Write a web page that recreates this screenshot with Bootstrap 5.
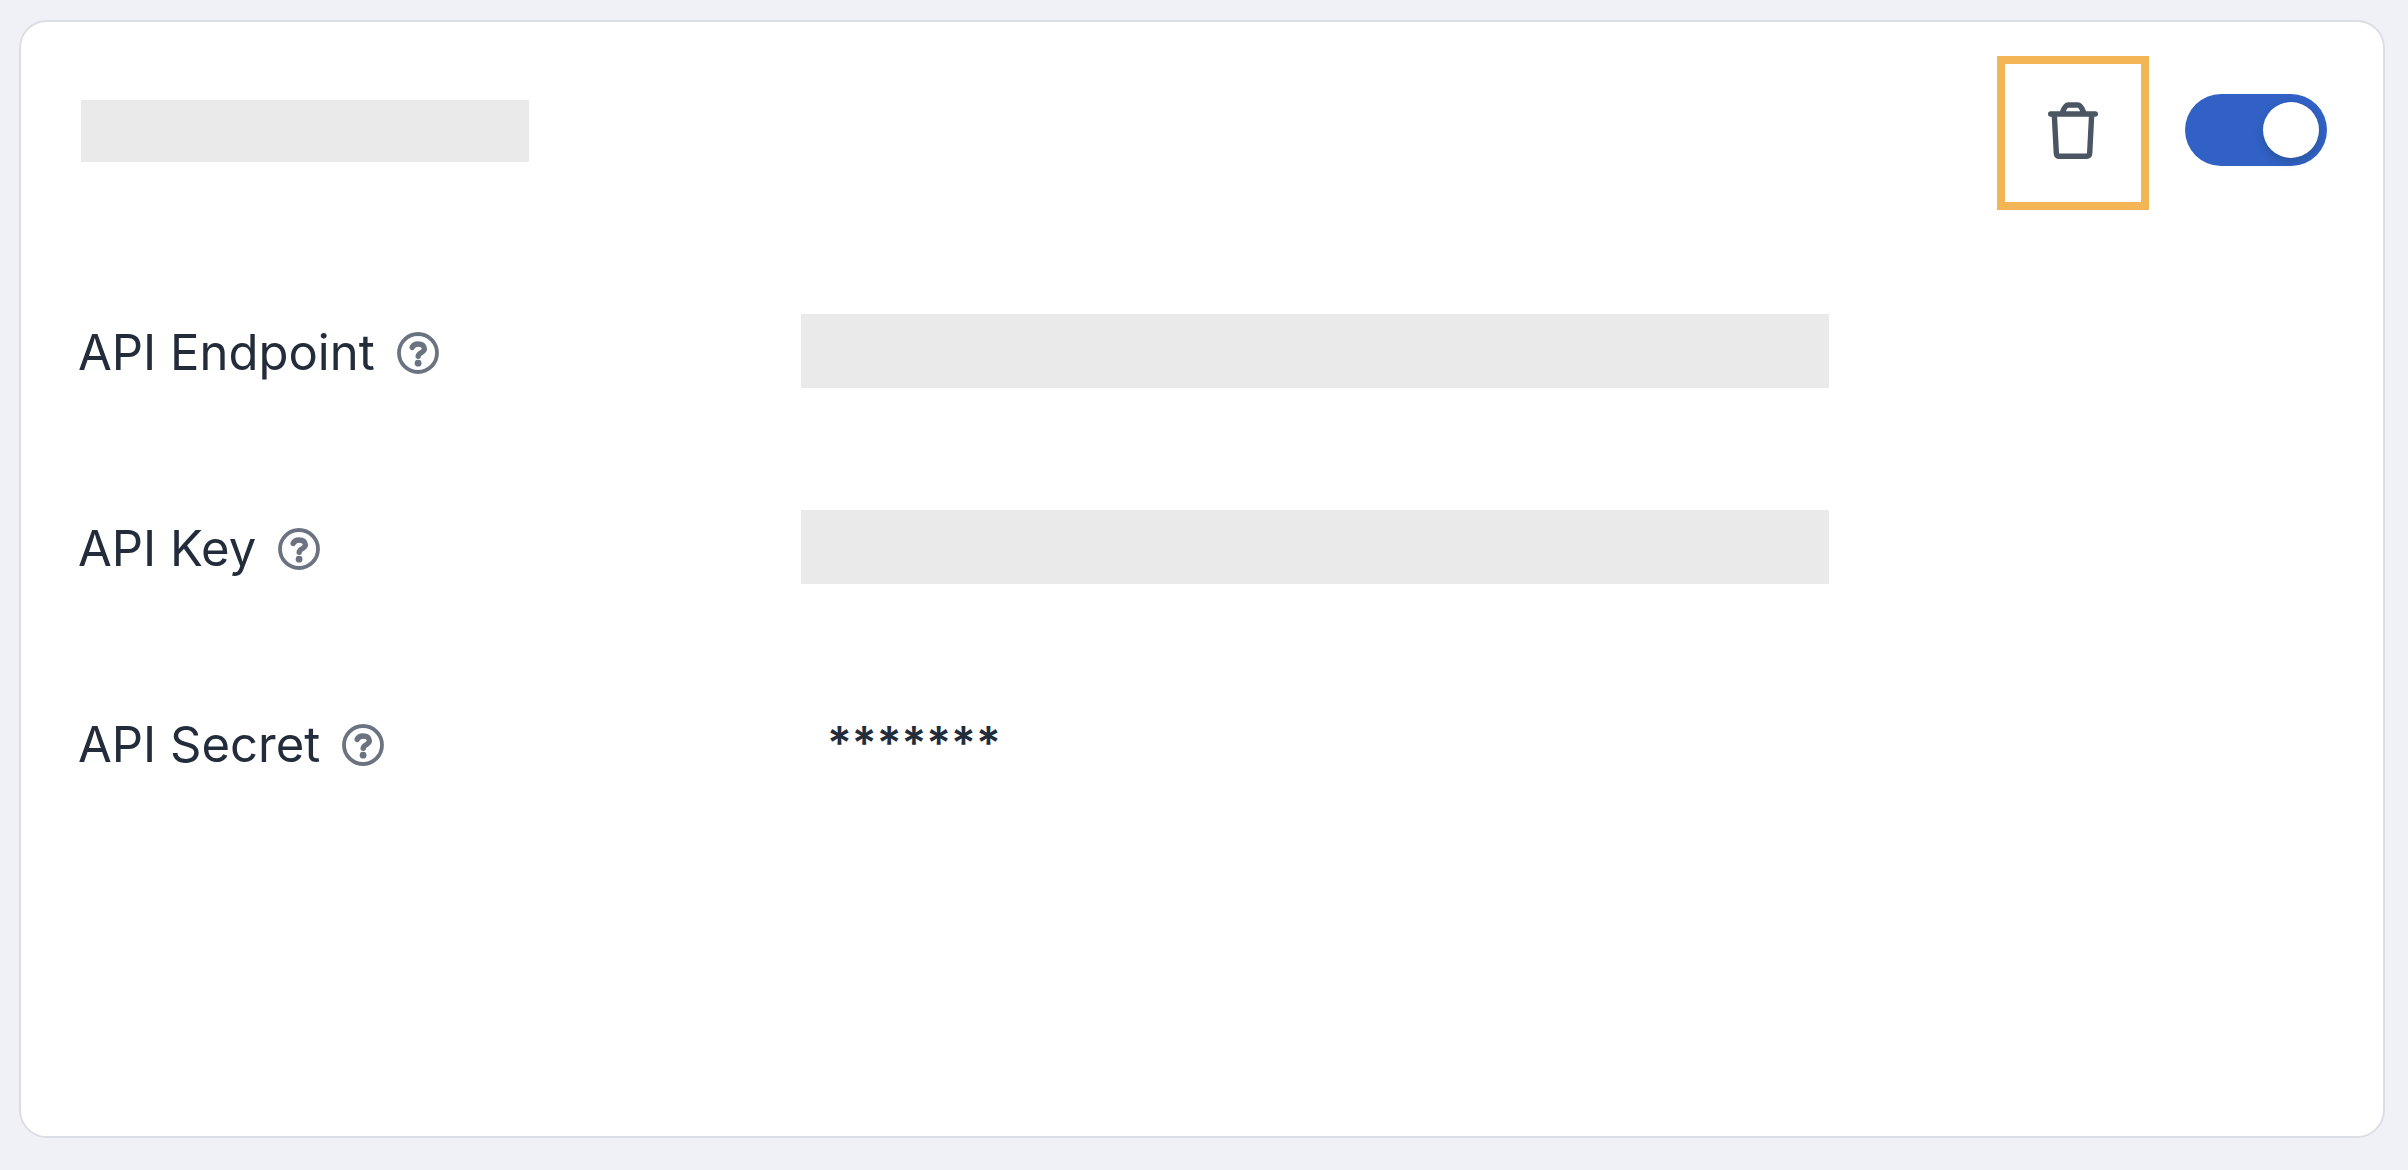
<!DOCTYPE html>
<html lang="en">
<head>
<meta charset="utf-8">
<meta name="viewport" content="width=device-width, initial-scale=1">
<title>API settings</title>
<link href="https://cdn.jsdelivr.net/npm/bootstrap@5.3.0/dist/css/bootstrap.min.css" rel="stylesheet">
<style>
body { background: #eff1f6; color: #232c3a; font-family: Inter, "Liberation Sans", sans-serif; font-size: 49px; line-height: 70px; }
.page-shell { min-height: 100vh; padding: 20px 23px 32px 19px; }
.api-card { border: 2px solid #dbdee4; border-radius: 28px; padding: 34px 56px 56px 57px; }
.api-title { width: 448px; height: 62px; margin: 0 0 4px 3px; background: #eaeaea; }
.card-actions { gap: 36px; }
.delete-btn { width: 152px; height: 154px; border: 8px solid #f4b556; border-radius: 0; padding: 0 0 6px; color: #4b5563; }
.form-check-input.api-switch { width: 142px; height: 72px; margin: 0 0 6px; padding: 8px; border: 0; border-radius: 36px; background: #3161c5; appearance: none; display: flex; }
.api-switch::before { content: ""; width: 56px; height: 56px; border-radius: 50%; background: #fff; box-shadow: 0 4px 8px rgba(0, 35, 11, .2); }
.form-check-input.api-switch:checked { background: #3161c5; justify-content: flex-end; }
.form-check-input.api-switch:not(:checked) { background: #9ca3af; }
.field-list { margin-top: 104px; gap: 122px; }
.field-line { display: grid; grid-template-columns: 723fr 1028fr 498fr; align-items: center; }
.field-name { gap: 22px; padding-top: 3px; }
.help-btn { color: #6b7280; line-height: 0; }
.field-value { width: 100%; height: 74px; padding: 0 26px; border: 0; border-radius: 0; color: inherit; font: inherit; background: transparent; }
.value-hidden { background: #eaeaea; }
.value-masked { font-size: 46px; font-weight: 600; }
</style>
</head>
<body>
<svg class="d-none" aria-hidden="true">
  <symbol id="help" viewBox="0 0 42 42">
    <circle cx="21" cy="21" r="19" fill="none" stroke="currentColor" stroke-width="3.8"/>
    <path d="M15.2 15.4C16.2 13 18.4 12 21.2 12c3.6 0 6.2 1.800 6.2 4.800 0 4-6.2 3.800-6.2 7.400" fill="none" stroke="currentColor" stroke-width="5.4" stroke-linecap="round"/>
    <circle cx="21.1" cy="31.2" r="3.4" fill="currentColor"/>
  </symbol>
</svg>
<main class="page-shell d-flex">
  <section class="api-card card flex-grow-1 bg-white">
    <header class="d-flex justify-content-between align-items-center">
      <div class="api-title"></div>
      <div class="card-actions d-flex align-items-center">
        <button type="button" class="delete-btn btn d-flex align-items-center justify-content-center" aria-label="Delete">
          <svg width="50" height="57" viewBox="0 0 50 57" fill="none" stroke="currentColor" stroke-width="5.4" stroke-linecap="round" stroke-linejoin="round" aria-hidden="true">
            <path d="M2.7 12h44.6M14 11.500l1-2.500Q17.500 3 20 3h10q2.500 0 5 6l1 2.500M6.300 12L8.300 51q.2 3.200 3 3.200h27.400q2.800 0 3-3.200L43.700 12"/>
          </svg>
        </button>
        <input class="form-check-input api-switch" type="checkbox" role="switch" aria-label="Enabled" checked>
      </div>
    </header>
    <div class="field-list d-flex flex-column">
      <div class="field-line">
        <div class="field-name d-flex align-items-center">
          <label for="endpoint">API Endpoint</label>
          <button type="button" class="help-btn btn p-0 border-0" aria-label="About API Endpoint"><svg width="42" height="42"><use href="#help"/></svg></button>
        </div>
        <input id="endpoint" class="field-value value-hidden" type="text" readonly>
      </div>
      <div class="field-line">
        <div class="field-name d-flex align-items-center">
          <label for="key">API Key</label>
          <button type="button" class="help-btn btn p-0 border-0" aria-label="About API Key"><svg width="42" height="42"><use href="#help"/></svg></button>
        </div>
        <input id="key" class="field-value value-hidden" type="text" readonly>
      </div>
      <div class="field-line">
        <div class="field-name d-flex align-items-center">
          <label for="secret">API Secret</label>
          <button type="button" class="help-btn btn p-0 border-0" aria-label="About API Secret"><svg width="42" height="42"><use href="#help"/></svg></button>
        </div>
        <input id="secret" class="field-value value-masked" type="text" value="*******" readonly>
      </div>
    </div>
  </section>
</main>
<script src="https://cdn.jsdelivr.net/npm/bootstrap@5.3.0/dist/js/bootstrap.bundle.min.js"></script>
</body>
</html>
